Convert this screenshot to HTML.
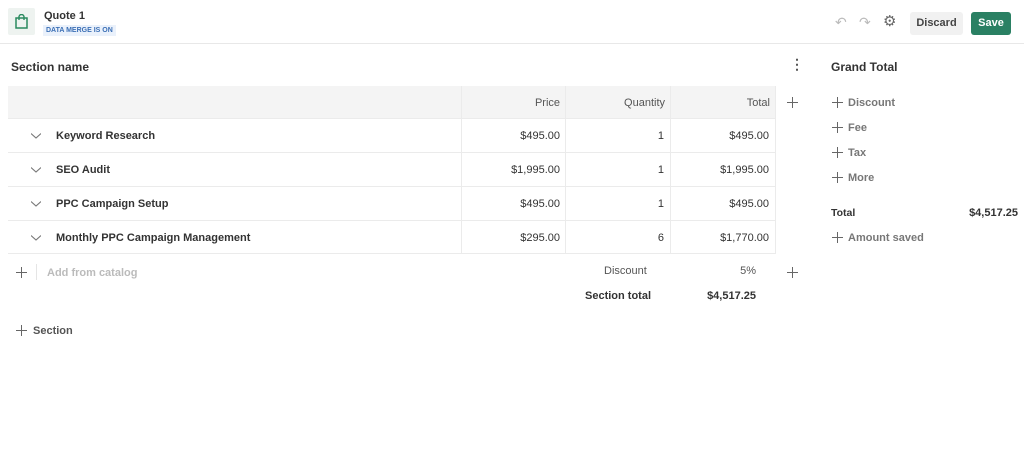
<!DOCTYPE html>
<html><head><meta charset="utf-8"><style>
*{margin:0;padding:0;box-sizing:border-box}
body{width:1024px;height:476px;background:#fff;font-family:"Liberation Sans",sans-serif;color:#333;position:relative;overflow:hidden;font-size:11px}
.a{position:absolute;white-space:nowrap}
.b{font-weight:bold}
.plus{position:absolute;width:11px;height:11px}
.plus:before{content:"";position:absolute;left:0;top:5px;width:11px;height:1.3px;background:#666}
.plus:after{content:"";position:absolute;left:5px;top:0;width:1.3px;height:11px;background:#666}
.hl{position:absolute;left:8px;width:768px;height:1px;background:#ebebeb}
.vl{position:absolute;width:1px;background:#ebebeb;top:86px;height:168px}
.r{text-align:right}
.chev{position:absolute;left:31px;width:10px;height:6px}
</style></head><body>
<div class="a" style="left:8px;top:8px;width:27px;height:27px;background:#eef3f0;border-radius:2px"></div>
<svg class="a" style="left:15px;top:14px" width="13" height="15" viewBox="0 0 13 15"><rect x="1" y="4" width="11" height="10" fill="none" stroke="#2a8a5f" stroke-width="1.5"/><path d="M4 6V3a2.5 2.5 0 0 1 5 0v3" fill="none" stroke="#2a8a5f" stroke-width="1.4"/></svg>
<div class="a b" style="left:44px;top:10px;font-size:11px;color:#333">Quote 1</div>
<div class="a b" style="left:43px;top:25px;font-size:7px;color:#3b6fb5;background:#eaf1fb;padding:2px 3px">DATA MERGE IS ON</div>
<div class="a" style="left:835px;top:14px;color:#bbb;font-size:14px">↶</div>
<div class="a" style="left:859px;top:14px;color:#bbb;font-size:14px">↷</div>
<div class="a" style="left:883px;top:12px;color:#666;font-size:15px">⚙</div>
<div class="a b" style="left:910px;top:12px;width:53px;height:23px;background:#f1f1f1;border-radius:3px;font-size:11px;color:#444;text-align:center;line-height:23px">Discard</div>
<div class="a b" style="left:971px;top:12px;width:40px;height:23px;background:#2a8063;border-radius:3px;font-size:11px;color:#fff;text-align:center;line-height:23px">Save</div>
<div class="a" style="left:0;top:43px;width:1024px;height:1px;background:#e8e8e8"></div>

<div class="a b" style="left:11px;top:60px;font-size:12px;color:#333">Section name</div>
<div class="a b" style="left:790px;top:57px;font-size:14px;color:#555;line-height:1">⋮</div>
<div class="a" style="left:8px;top:86px;width:768px;height:32px;background:#f4f4f4"></div>
<div class="hl" style="top:118px"></div><div class="hl" style="top:152px"></div><div class="hl" style="top:186px"></div><div class="hl" style="top:220px"></div><div class="hl" style="top:253px"></div>
<div class="vl" style="left:461px"></div><div class="vl" style="left:565px"></div><div class="vl" style="left:670px"></div><div class="vl" style="left:775px"></div>
<div class="a r" style="left:470px;width:90px;top:97px;color:#555">Price</div>
<div class="a r" style="left:570px;width:95px;top:97px;color:#555">Quantity</div>
<div class="a r" style="left:675px;width:95px;top:97px;color:#555">Total</div>
<div class="plus" style="left:787px;top:97px"></div>

<svg class="chev" style="top:133px" viewBox="0 0 10 6"><path d="M0 0.5L5 5L10 0.5" fill="none" stroke="#777" stroke-width="1.1"/></svg>
<div class="a b" style="left:56px;top:130px">Keyword Research</div>
<div class="a r" style="left:460px;width:100px;top:130px">$495.00</div><div class="a r" style="left:570px;width:94px;top:130px">1</div><div class="a r" style="left:670px;width:99px;top:130px">$495.00</div>

<svg class="chev" style="top:167px" viewBox="0 0 10 6"><path d="M0 0.5L5 5L10 0.5" fill="none" stroke="#777" stroke-width="1.1"/></svg>
<div class="a b" style="left:56px;top:164px">SEO Audit</div>
<div class="a r" style="left:460px;width:100px;top:164px">$1,995.00</div><div class="a r" style="left:570px;width:94px;top:164px">1</div><div class="a r" style="left:670px;width:99px;top:164px">$1,995.00</div>

<svg class="chev" style="top:201px" viewBox="0 0 10 6"><path d="M0 0.5L5 5L10 0.5" fill="none" stroke="#777" stroke-width="1.1"/></svg>
<div class="a b" style="left:56px;top:198px">PPC Campaign Setup</div>
<div class="a r" style="left:460px;width:100px;top:198px">$495.00</div><div class="a r" style="left:570px;width:94px;top:198px">1</div><div class="a r" style="left:670px;width:99px;top:198px">$495.00</div>

<svg class="chev" style="top:235px" viewBox="0 0 10 6"><path d="M0 0.5L5 5L10 0.5" fill="none" stroke="#777" stroke-width="1.1"/></svg>
<div class="a b" style="left:56px;top:232px">Monthly PPC Campaign Management</div>
<div class="a r" style="left:460px;width:100px;top:232px">$295.00</div><div class="a r" style="left:570px;width:94px;top:232px">6</div><div class="a r" style="left:670px;width:99px;top:232px">$1,770.00</div>

<div class="plus" style="left:16px;top:267px"></div>
<div class="a" style="left:36px;top:264px;width:1px;height:16px;background:#e5e5e5"></div>
<div class="a b" style="left:47px;top:267px;color:#bbb">Add from catalog</div>
<div class="a" style="left:604px;top:265px;color:#555">Discount</div>
<div class="a r" style="left:700px;width:56px;top:265px;color:#555">5%</div>
<div class="plus" style="left:787px;top:267px"></div>
<div class="a b" style="left:585px;top:290px">Section total</div>
<div class="a b r" style="left:690px;width:66px;top:290px">$4,517.25</div>
<div class="plus" style="left:16px;top:325px"></div>
<div class="a b" style="left:33px;top:325px;color:#555">Section</div>

<div class="a b" style="left:831px;top:60px;font-size:12px">Grand Total</div>
<div class="plus" style="left:832px;top:97px"></div><div class="a b" style="left:848px;top:97px;color:#777">Discount</div>
<div class="plus" style="left:832px;top:122px"></div><div class="a b" style="left:848px;top:122px;color:#777">Fee</div>
<div class="plus" style="left:832px;top:147px"></div><div class="a b" style="left:848px;top:147px;color:#777">Tax</div>
<div class="plus" style="left:832px;top:172px"></div><div class="a b" style="left:848px;top:172px;color:#777">More</div>
<div class="a b" style="left:831px;top:207px;font-size:10.5px">Total</div>
<div class="a b r" style="left:950px;width:68px;top:207px">$4,517.25</div>
<div class="plus" style="left:832px;top:232px"></div><div class="a b" style="left:848px;top:232px;color:#777">Amount saved</div>
</body></html>
